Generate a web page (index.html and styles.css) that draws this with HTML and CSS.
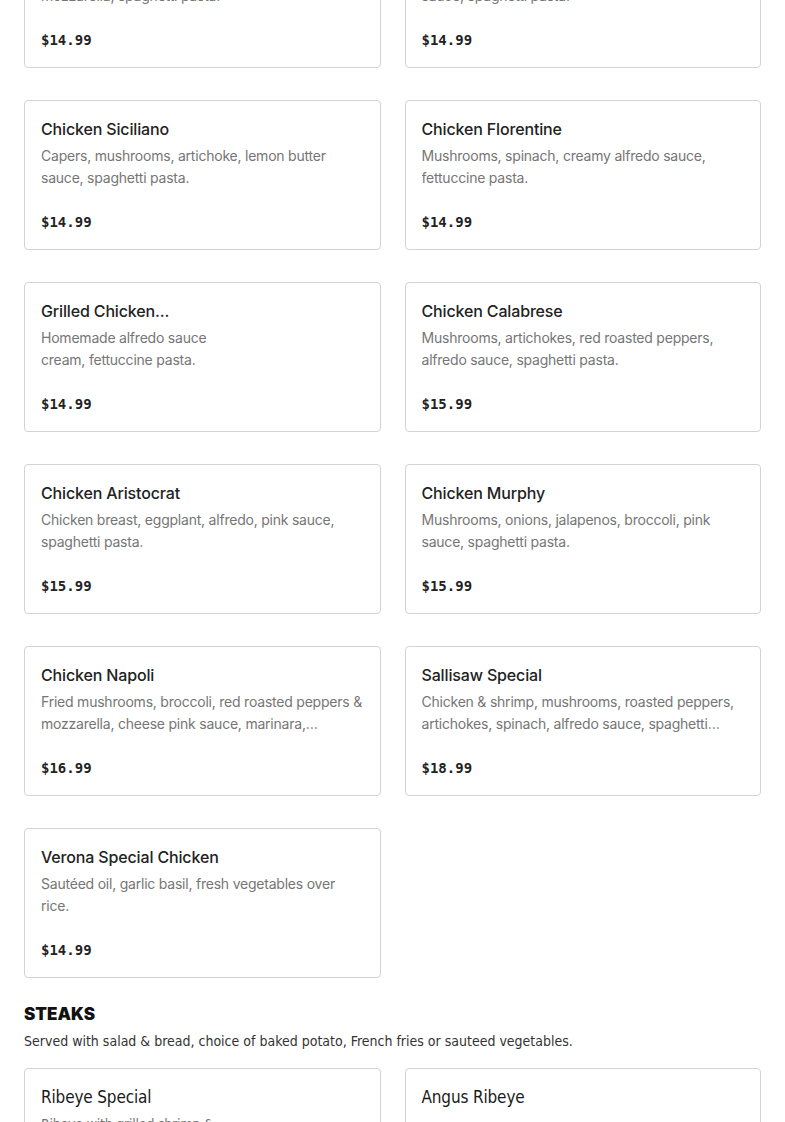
FILE: index.html
```html
<!DOCTYPE html>
<html>
<head>
<meta charset="utf-8">
<link rel="stylesheet" href="styles.css">
</head>
<body>
<main class="page">
  <section class="section">
    <div class="grid">
      <div class="card">
        <div class="title">Chicken Parmigiana</div>
        <div class="desc">Breaded chicken breast, marinara sauce, mozzarella, spaghetti pasta.</div>
        <div class="price">$14.99</div>
      </div>
      <div class="card">
        <div class="title">Chicken Marsala</div>
        <div class="desc">Mushrooms, marsala wine sauce, mushrooms sauce, spaghetti pasta.</div>
        <div class="price">$14.99</div>
      </div>
      <div class="card">
        <div class="title">Chicken Siciliano</div>
        <div class="desc">Capers, mushrooms, artichoke, lemon butter sauce, spaghetti pasta.</div>
        <div class="price">$14.99</div>
      </div>
      <div class="card">
        <div class="title">Chicken Florentine</div>
        <div class="desc">Mushrooms, spinach, creamy alfredo sauce, fettuccine pasta.</div>
        <div class="price">$14.99</div>
      </div>
      <div class="card">
        <div class="title">Grilled Chicken...</div>
        <div class="desc">Homemade alfredo sauce<br>cream, fettuccine pasta.</div>
        <div class="price">$14.99</div>
      </div>
      <div class="card">
        <div class="title">Chicken Calabrese</div>
        <div class="desc">Mushrooms, artichokes, red roasted peppers, alfredo sauce, spaghetti pasta.</div>
        <div class="price">$15.99</div>
      </div>
      <div class="card">
        <div class="title">Chicken Aristocrat</div>
        <div class="desc">Chicken breast, eggplant, alfredo, pink sauce, spaghetti pasta.</div>
        <div class="price">$15.99</div>
      </div>
      <div class="card">
        <div class="title">Chicken Murphy</div>
        <div class="desc">Mushrooms, onions, jalapenos, broccoli, pink sauce, spaghetti pasta.</div>
        <div class="price">$15.99</div>
      </div>
      <div class="card">
        <div class="title">Chicken Napoli</div>
        <div class="desc">Fried mushrooms, broccoli, red roasted peppers &amp; mozzarella, cheese pink sauce, marinara, spaghetti pasta.</div>
        <div class="price">$16.99</div>
      </div>
      <div class="card">
        <div class="title">Sallisaw Special</div>
        <div class="desc">Chicken &amp; shrimp, mushrooms, roasted peppers, artichokes, spinach, alfredo sauce, spaghetti pasta.</div>
        <div class="price">$18.99</div>
      </div>
      <div class="card">
        <div class="title">Verona Special Chicken</div>
        <div class="desc">Sautéed oil, garlic basil, fresh vegetables over rice.</div>
        <div class="price">$14.99</div>
      </div>
    </div>
  </section>
  <section class="section steaks">
    <h2 class="section-title">STEAKS</h2>
    <p class="section-sub">Served with salad &amp; bread, choice of baked potato, French fries or sauteed vegetables.</p>
    <div class="grid">
      <div class="card">
        <div class="title">Ribeye Special</div>
        <div class="desc">Ribeye with grilled shrimp &amp;<br>mushrooms.</div>
        <div class="price">$27.99</div>
      </div>
      <div class="card">
        <div class="title">Angus Ribeye</div>
        <div class="price">$24.99</div>
      </div>
    </div>
  </section>
</main>
</body>
</html>
```
FILE: styles.css
```css
* { box-sizing: border-box; }
html, body { margin: 0; padding: 0; background: #fff; }
body {
  font-family: Inter, "Noto Sans", "Liberation Sans", sans-serif;
  color: #222;
  overflow: hidden;
}
.page {
  padding: 0 24px;
  margin-top: -82px;
}
.grid {
  display: grid;
  grid-template-columns: 1fr 1fr;
  column-gap: 24px;
  row-gap: 32px;
}
.card {
  border: 1px solid #d3d3d3;
  border-radius: 4px;
  padding: 16px 16px 16px;
  height: 150px;
  display: flex;
  flex-direction: column;
}
.title {
  font-size: 16px;
  font-weight: 500;
  line-height: 24px;
  color: #222;
  letter-spacing: -0.15px;
}
.desc {
  margin-top: 4px;
  font-size: 14px;
  line-height: 22px;
  color: #767676;
  display: -webkit-box;
  -webkit-line-clamp: 2;
  -webkit-box-orient: vertical;
  overflow: hidden;
  letter-spacing: -0.22px;
}
.price {
  margin-top: auto;
  font-family: "DejaVu Sans Mono", "Liberation Mono", monospace;
  font-weight: bold;
  font-size: 14px;
  line-height: 22px;
  color: #222;
}
.steaks { margin-top: 25px; }
.section-title {
  margin: 0;
  font-family: Inter, "Liberation Sans", Arial, sans-serif;
  font-weight: 900;
  font-size: 17px;
  line-height: 22px;
  color: #111;
  letter-spacing: 0;
}
.section-sub {
  margin: 5px 0 16px;
  font-family: "DejaVu Sans Condensed", Roboto, sans-serif;
  font-stretch: condensed;
  font-size: 14px;
  line-height: 22px;
  color: #333;
}
.steaks .title {
  font-family: "DejaVu Sans Condensed", Roboto, sans-serif;
  font-stretch: condensed;
  font-size: 17px;
  color: #1a1a1a;
}
.steaks .desc {
  font-family: "DejaVu Sans Condensed", Roboto, sans-serif;
  font-stretch: condensed;
}
```
